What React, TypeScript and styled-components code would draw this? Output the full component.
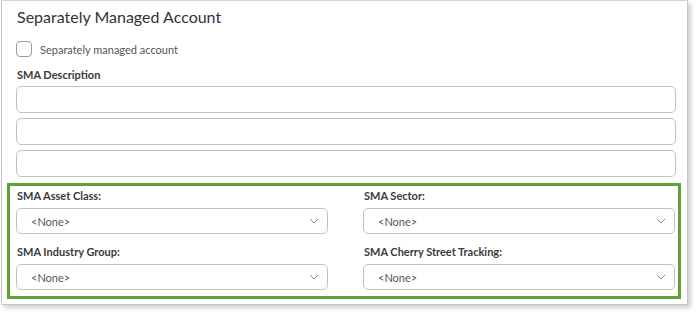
import styled, { createGlobalStyle } from "styled-components";

const GlobalStyle = createGlobalStyle`
    body{margin: 0; background: #fff; font-family: Lato, "Open Sans", sans-serif;}
    *{box-sizing: border-box;}
`;

const Page = styled.div`
    width: 697px; height: 313px; padding: 0 0 0 1px;
`;

const Panel = styled.section`
    width: 687px; height: 305px; border: 1px solid #c6c6c6; border-top-color: #d4d4d4;
    box-shadow: 3px 3px 4px rgba(0, 0, 0, 0.18);
    padding: 5px 11px 0 14px; background: #fff;
`;

const Title = styled.h2`
    margin: 0; font-size: 16px; font-weight: 400; color: #333; line-height: 22px; padding-left: 1px;
`;

const CheckRow = styled.label`
    display: flex; align-items: center; gap: 8px; margin-top: 13px; height: 16px;
    font-size: 11px; color: #555;
`;

const Box = styled.span`
    width: 16px; height: 16px; border: 1px solid #9a9a9a; border-radius: 4px; background: #fff;
`;

const FieldLabel = styled.div<{ $top?: number }>`
    font-size: 11px; font-weight: 700; color: #3a3a3a; line-height: 14px;
    margin-top: ${p => p.$top ?? 0}px; padding-left: 1px;
`;

const Inputs = styled.div`
    display: flex; flex-direction: column; gap: 5px; margin-top: 4px;
`;

const TextInput = styled.div`
    height: 27px; border: 1px solid #c2c2c2; border-radius: 5px; background: #fff;
`;

const Highlight = styled.div`
    margin: 6px -5px 0 -9px; border: 3px solid #62a032;
    padding: 0 2px 0 6px; height: 116px;
    display: grid; grid-template-columns: 312px 312px; column-gap: 35px; align-content: start;
`;

const Field = styled.div<{ $second?: boolean }>`
    margin-top: ${p => (p.$second ? 11 : 3)}px;
`;

const Select = styled.div`
    height: 26px; margin-top: 5px; border: 1px solid #c2c2c2; border-radius: 5px;
    display: flex; align-items: center; justify-content: space-between;
    padding: 0 8px 0 14px; font-size: 11px; color: #555;
`;

const Chevron = () => (
    <svg width="10" height="6" viewBox="0 0 10 6">
        <path d="M1 1 L5 5 L9 1" fill="none" stroke="#8a8a8a" strokeWidth="1" />
    </svg>
);

const selects = [
    { label: "SMA Asset Class:" },
    { label: "SMA Sector:" },
    { label: "SMA Industry Group:" },
    { label: "SMA Cherry Street Tracking:" },
];

export default function App() {
    return (
        <Page>
            <GlobalStyle />
            <Panel>
                <Title>Separately Managed Account</Title>
                <CheckRow><Box />Separately managed account</CheckRow>
                <FieldLabel $top={11}>SMA Description</FieldLabel>
                <Inputs>
                    <TextInput />
                    <TextInput />
                    <TextInput />
                </Inputs>
                <Highlight>
                    {selects.map((s, i) => (
                        <Field key={s.label} $second={i > 1}>
                            <FieldLabel>{s.label}</FieldLabel>
                            <Select>&lt;None&gt;<Chevron /></Select>
                        </Field>
                    ))}
                </Highlight>
            </Panel>
        </Page>
    );
}
